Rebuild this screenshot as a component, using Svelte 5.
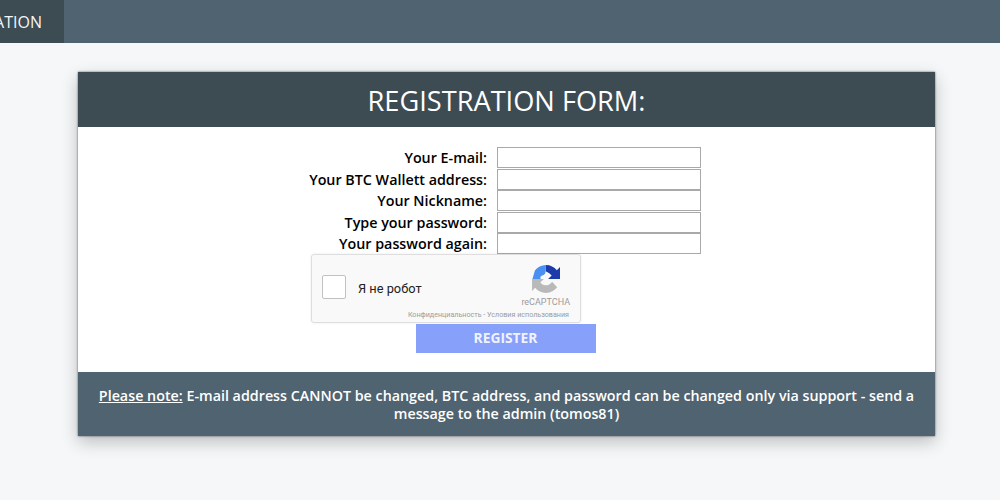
<script>
	const fields = [
		{ label: 'Your E-mail:', type: 'text' },
		{ label: 'Your BTC Wallett address:', type: 'text' },
		{ label: 'Your Nickname:', type: 'text' },
		{ label: 'Type your password:', type: 'password' },
		{ label: 'Your password again:', type: 'password' }
	];
</script>

<nav class="topbar">
	<a class="tab" href="#top"><span>REGISTRATION</span></a>
</nav>

<main class="page">
	<section class="card">
		<h1 class="card-title">REGISTRATION FORM:</h1>

		<form class="form" onsubmit={(e) => e.preventDefault()}>
			<div class="fields">
				{#each fields as field}
					<label class="field">
						<span class="field-label">{field.label}</span>
						<input class="field-input" type={field.type} />
					</label>
				{/each}
			</div>

			<div class="captcha">
				<span class="captcha-box"></span>
				<span class="captcha-text">Я не робот</span>
				<div class="captcha-brand">
					<svg class="captcha-logo" width="28" height="28" viewBox="0 0 64 64" aria-hidden="true">
						<path d="M64 32 V4.7 L56.8 11.9 C51 4.7 42 0.1 32 0.1 L31 14 C37.6 16.9 42.3 19.8 45 24.2 L36.7 32 Z" fill="#1c3aa9" />
						<path d="M32 0.1 C21.6 0.1 12.4 5 6.6 12.7 L1 32 H20 C19 29 18 27 22 24.6 C26 22.5 31 22 31 14 Z" fill="#4a90f2" />
						<path d="M0.1 32 L0.1 59.2 L7.3 52 C13.1 59.2 22 63.8 32 63.8 C42.4 63.8 51.6 58.8 57.5 51.1 L45.8 38.3 A15.5 15.5 0 0 1 41 43.6 C39 45.2 36 46.5 32 46.5 C31.6 46.5 31.2 46.4 30.9 46.3 C25.9 45.9 21.6 43.2 19.1 39.2 L27.4 32 Z" fill="#b9b9b9" />
					</svg>
					<span class="captcha-name">reCAPTCHA</span>
				</div>
				<span class="captcha-links">Конфиденциальность - Условия использования</span>
			</div>

			<button class="submit" type="submit">REGISTER</button>
		</form>

		<p class="note">
			<u>Please note:</u> E-mail address CANNOT be changed, BTC address, and password can be changed only via support - send a message to the admin (tomos81)
		</p>
	</section>
</main>

<style>
	:global(body) {
		background: #f5f7f9;
		font-family: "Open Sans", sans-serif;
	}

	.topbar {
		display: flex;
		justify-content: flex-start;
		height: 43px;
		background: #4f6370;
	}

	.tab {
		display: flex;
		justify-content: flex-end;
		align-items: center;
		width: 64px;
		height: 43px;
		padding-right: 22px;
		box-sizing: border-box;
		overflow: hidden;
		background: #3d4b53;
		color: #f4f6f8;
		font-size: 16px;
		text-decoration: none;
		white-space: nowrap;
	}

	.page {
		padding: 29px 65px 0 78px;
		height: 428px;
		box-sizing: border-box;
	}

	.card {
		width: 857px;
		background: #fff;
		box-shadow: 0 0 2px rgba(0, 0, 0, 0.6), 0 6px 16px rgba(0, 0, 0, 0.24);
	}

	.card-title {
		margin: 0;
		height: 55px;
		background: #3d4b53;
		color: #fff;
		font-size: 27.2px;
		font-weight: 400;
		line-height: 57px;
		text-align: center;
	}

	.form {
		display: flex;
		flex-direction: column;
		width: 389px;
		height: 245px;
		margin: 0 auto;
		padding-top: 20px;
		box-sizing: border-box;
	}

	.fields {
		display: flex;
		flex-direction: column;
		gap: 0.5px;
		margin-left: -4px;
	}

	.field {
		display: flex;
		justify-content: flex-end;
		align-items: center;
		gap: 10px;
		height: 21px;
	}

	.field-label {
		color: #000;
		font-size: 14.3px;
		font-weight: 600;
		white-space: nowrap;
	}

	.field-input {
		width: 204px;
		height: 21px;
		padding: 0;
		box-sizing: border-box;
		border: 1px solid #a9a9a9;
		background: #fff;
	}

	.captcha {
		position: relative;
		flex: none;
		width: 270px;
		height: 69px;
		margin: -0.5px 0 0 -1px;
		box-sizing: border-box;
		border: 1px solid #dedede;
		border-radius: 3px;
		background: #f9f9f9;
		box-shadow: 0 0 3px rgba(0, 0, 0, 0.08);
	}

	.captcha-box {
		position: absolute;
		left: 10px;
		top: 20px;
		width: 24px;
		height: 24px;
		box-sizing: border-box;
		border: 1px solid #c1c1c1;
		border-radius: 2px;
		background: #fff;
	}

	.captcha-text {
		position: absolute;
		left: 46px;
		top: 26px;
		color: #222;
		font-family: Roboto, sans-serif;
		font-size: 12.8px;
		line-height: 16px;
	}

	.captcha-brand {
		position: absolute;
		right: 10px;
		top: 10px;
		display: flex;
		flex-direction: column;
		align-items: center;
		gap: 3px;
	}

	.captcha-name {
		color: #9b9b9b;
		font-family: Roboto, sans-serif;
		font-size: 9px;
		line-height: 12px;
	}

	.captcha-links {
		position: absolute;
		right: 11px;
		bottom: 3px;
		color: #9b9b9b;
		font-family: Roboto, sans-serif;
		font-size: 7.15px;
		line-height: 9px;
		white-space: nowrap;
	}

	.submit {
		align-self: center;
		flex: none;
		width: 180px;
		height: 29px;
		margin: 1px 0 0 -1px;
		padding: 0 1px 2px 0;
		border: 0;
		background: #87a1fa;
		color: #f0f3ff;
		font-family: inherit;
		font-size: 13.8px;
		font-weight: 700;
	}

	.note {
		margin: 0;
		height: 64px;
		padding: 15px 20px 0;
		box-sizing: border-box;
		background: #4f6370;
		color: #fff;
		font-size: 14.3px;
		font-weight: 600;
		line-height: 18px;
		text-align: center;
	}
</style>
